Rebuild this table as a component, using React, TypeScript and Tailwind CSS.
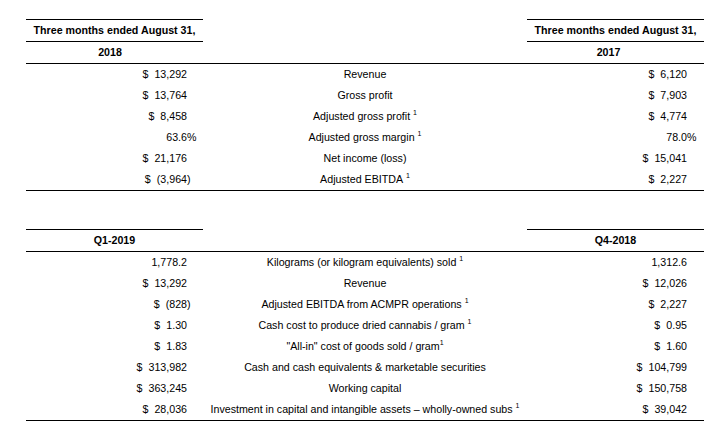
import React from "react";

type Val = { dollar?: boolean; num: string; suffix?: string } | null;

function Value({ v, pr }: { v: Val; pr: "left" | "right" }) {
  return (
    <div
      className={
        "flex h-[21px] items-center justify-end whitespace-nowrap leading-none " +
        (pr === "left" ? "pr-[16px]" : "pr-[17px]")
      }
    >
      {v && v.dollar ? <span>$</span> : null}
      {v ? <span className={v.dollar ? "ml-[6px]" : ""}>{v.num}</span> : null}
      {v && v.suffix ? (
        <span className="inline-block w-0 overflow-visible">{v.suffix}</span>
      ) : null}
    </div>
  );
}

function Sup() {
  return <span className="relative -top-[4px] text-[7px] leading-none">1</span>;
}

type Row = { l: Val; label: React.ReactNode; r: Val };

const d = (num: string): Val => ({ dollar: true, num });
const neg = (num: string): Val => ({ dollar: true, num: "(" + num, suffix: ")" });
const pct = (num: string): Val => ({ num, suffix: "%" });
const plain = (num: string): Val => ({ num });

const rows1: Row[] = [
  { l: d("13,292"), label: "Revenue", r: d("6,120") },
  { l: d("13,764"), label: "Gross profit", r: d("7,903") },
  {
    l: d("8,458"),
    label: (
      <>
        Adjusted gross profit&nbsp;<Sup />
      </>
    ),
    r: d("4,774"),
  },
  {
    l: pct("63.6"),
    label: (
      <>
        Adjusted gross margin&nbsp;<Sup />
      </>
    ),
    r: pct("78.0"),
  },
  { l: d("21,176"), label: "Net income (loss)", r: d("15,041") },
  {
    l: neg("3,964"),
    label: (
      <>
        Adjusted EBITDA&nbsp;<Sup />
      </>
    ),
    r: d("2,227"),
  },
];

const rows2: Row[] = [
  {
    l: plain("1,778.2"),
    label: (
      <>
        Kilograms (or kilogram equivalents) sold&nbsp;<Sup />
      </>
    ),
    r: plain("1,312.6"),
  },
  { l: d("13,292"), label: "Revenue", r: d("12,026") },
  {
    l: neg("828"),
    label: (
      <>
        Adjusted EBITDA from ACMPR operations&nbsp;<Sup />
      </>
    ),
    r: d("2,227"),
  },
  {
    l: d("1.30"),
    label: (
      <>
        Cash cost to produce dried cannabis / gram&nbsp;<Sup />
      </>
    ),
    r: d("0.95"),
  },
  {
    l: d("1.83"),
    label: (
      <>
        "All-in" cost of goods sold / gram
        <Sup />
      </>
    ),
    r: d("1.60"),
  },
  {
    l: d("313,982"),
    label: "Cash and cash equivalents & marketable securities",
    r: d("104,799"),
  },
  { l: d("363,245"), label: "Working capital", r: d("150,758") },
  {
    l: d("28,036"),
    label: (
      <>
        Investment in capital and intangible assets – wholly-owned subs&nbsp;<Sup />
      </>
    ),
    r: d("39,042"),
  },
];

function DataRows({ rows }: { rows: Row[] }) {
  return (
    <div className="border-b border-black">
      {rows.map((row, i) => (
        <div key={i} className="grid grid-cols-[177px_324px_177px]">
          <Value v={row.l} pr="left" />
          <div className="flex h-[21px] items-center justify-center whitespace-nowrap leading-none">
            {row.label}
          </div>
          <Value v={row.r} pr="right" />
        </div>
      ))}
    </div>
  );
}

export default function App() {
  return (
    <div
      className="min-h-screen w-full bg-white pl-[26px] pt-[19px] text-[10.67px] text-black"
      style={{ fontFamily: '"Liberation Sans", Arial, sans-serif' }}
    >
      <div className="w-[678px]">
        {/* Table 1 */}
        <div className="grid grid-cols-[177px_324px_177px]">
          <div className="flex h-[23px] items-center justify-center border-y border-black font-bold leading-none">
            Three months ended August 31,
          </div>
          <div />
          <div className="flex h-[23px] items-center justify-center border-y border-black font-bold leading-none">
            Three months ended August 31,
          </div>
        </div>
        <div className="grid h-[22px] grid-cols-[177px_324px_177px] border-b border-black">
          <div className="flex items-center justify-center pr-[9px] font-bold leading-none">2018</div>
          <div />
          <div className="flex items-center justify-center pr-[14px] font-bold leading-none">2017</div>
        </div>
        <DataRows rows={rows1} />

        {/* Table 2 */}
        <div className="mt-[38px] grid h-[23px] grid-cols-[177px_324px_177px] border-b border-black">
          <div className="flex items-center justify-center border-t border-black font-bold leading-none">
            Q1-2019
          </div>
          <div />
          <div className="flex items-center justify-center border-t border-black font-bold leading-none">
            Q4-2018
          </div>
        </div>
        <DataRows rows={rows2} />
      </div>
    </div>
  );
}
